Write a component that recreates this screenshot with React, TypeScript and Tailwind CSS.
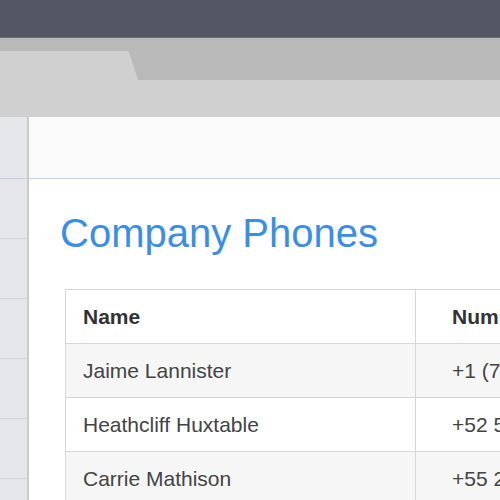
import React from "react";

const rows = [
  { name: "Jaime Lannister", num: "+1 (703) 555-0142" },
  { name: "Heathcliff Huxtable", num: "+52 55 5555 0198" },
  { name: "Carrie Mathison", num: "+55 21 5555 0176" },
];

export default function App() {
  return (
    <div
      className="w-[500px] h-[500px] overflow-hidden flex flex-col bg-white"
      style={{ fontFamily: '"Liberation Sans", Arial, sans-serif' }}
    >
      <div className="h-[38px] shrink-0 bg-[#535764] border-b border-[#6d707a]" />
      <div className="h-[42px] shrink-0 bg-[#b9b9b9] flex items-end">
        <div className="w-[138px] h-[29px] bg-[#d0d0d0] [clip-path:polygon(0_0,127px_0,129px_1px,138px_29px,0_29px)]" />
      </div>
      <div className="h-[37px] shrink-0 bg-[#d0d0d0]" />
      <div className="flex flex-1 min-h-0">
        <div className="w-[29px] shrink-0 bg-[#e4e6ea] border-r-2 border-[#c9cacd] flex flex-col">
          <div className="h-[62px] shrink-0 border-b border-[#bcd2ea]" />
          {[0, 1, 2, 3, 4, 5].map((i) => (
            <div key={i} className="h-[60px] shrink-0 border-b border-[#d3d5d9]" />
          ))}
        </div>
        <div className="flex-1 min-w-0 flex flex-col">
          <div className="h-[62px] shrink-0 bg-[#fafafa] border-b border-[#bcd2ea]" />
          <div className="flex-1 bg-white pl-[31px] pt-[34px]">
            <h1 className="text-[40px] leading-none text-[#3a8ee8] font-normal">
              Company Phones
            </h1>
            <div className="ml-[5px] mt-[36px] w-[700px] border-t border-l border-[#d6d6d6] text-[21px] text-[#444]">
              <div className="flex h-[54px] bg-white border-b border-[#d6d6d6]">
                <div className="w-[350px] shrink-0 border-r border-[#d6d6d6] pl-[17px] flex items-center font-bold text-[#333]">
                  Name
                </div>
                <div className="flex-1 pl-[36px] flex items-center font-bold text-[#333]">Number</div>
              </div>
              {rows.map((r, i) => (
                <div
                  key={r.name}
                  className={`flex h-[54px] border-b border-[#d6d6d6] ${i % 2 === 0 ? "bg-[#f6f6f6]" : "bg-white"}`}
                >
                  <div className="w-[350px] shrink-0 border-r border-[#d6d6d6] pl-[17px] flex items-center">
                    {r.name}
                  </div>
                  <div className="flex-1 pl-[36px] flex items-center whitespace-nowrap">{r.num}</div>
                </div>
              ))}
            </div>
          </div>
        </div>
      </div>
    </div>
  );
}
